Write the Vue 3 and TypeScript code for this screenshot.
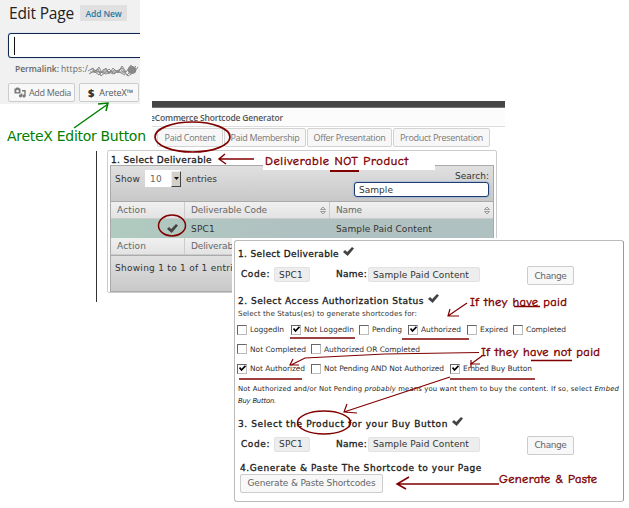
<script setup lang="ts">
import type { Directive } from 'vue'

interface Status { label: string; on: boolean; width: number }

// Tracks a label out (or in) so that it fills the given width in pixels.
const vFit: Directive<HTMLElement, number> = {
  mounted(el, { value }) {
    const natural = el.getBoundingClientRect().width
    const count = (el.textContent ?? '').length
    el.style.letterSpacing = `${(value - natural) / count}px`
  },
}

const tabs = [
  { label: 'Paid Content', width: 51 },
  { label: 'Paid Membership', width: 69 },
  { label: 'Offer Presentation', width: 72 },
  { label: 'Product Presentation', width: 83 },
]

const statusRows: Status[][] = [
  [
    { label: 'LoggedIn', on: false, width: 34 },
    { label: 'Not LoggedIn', on: true, width: 50 },
    { label: 'Pending', on: false, width: 30 },
    { label: 'Authorized', on: true, width: 40 },
    { label: 'Expired', on: false, width: 28 },
    { label: 'Completed', on: false, width: 40 },
  ],
  [
    { label: 'Not Completed', on: false, width: 56 },
    { label: 'Authorized OR Completed', on: false, width: 96 },
  ],
  [
    { label: 'Not Authorized', on: true, width: 55 },
    { label: 'Not Pending AND Not Authorized', on: false, width: 120 },
    { label: 'Embed Buy Button', on: true, width: 69 },
  ],
]
</script>

<template>
  <main class="canvas">
    <section class="editor">
      <div class="title-row">
        <h1 v-fit="65">Edit Page</h1>
        <span class="add-new"><span v-fit="36">Add New</span></span>
      </div>
      <div class="title-input"><i class="caret"></i></div>
      <div class="permalink"><b v-fit="44">Permalink:</b><span v-fit="27">https:/</span></div>
      <div class="media-row">
        <span class="wp-button media">
          <svg width="12" height="11" viewBox="0 0 12 11">
            <path fill-rule="evenodd" d="M.5 1.500h1.300L2.500.5h2l.7 1h1.300v5h-6zM3.500 2.700a1.300 1.300 0 1 0 .01 0z" fill="#777" />
            <path d="M8 3.800h3v5M7.700 9V6.500" fill="none" stroke="#777" stroke-width="1.400" />
            <circle cx="10" cy="9" r="1.600" fill="#777" /><circle cx="6.500" cy="8.800" r="1.600" fill="#777" />
          </svg>
          <span v-fit="42">Add Media</span>
        </span>
        <span class="wp-button aretex"><b>$</b><span v-fit="34">AreteX™</span></span>
      </div>
    </section>

    <section class="generator">
      <div class="top-bar"></div>
      <header><span v-fit="133">eCommerce Shortcode Generator</span></header>
      <nav>
        <span v-for="tab in tabs" :key="tab.label" class="tab"><span v-fit="tab.width">{{ tab.label }}</span></span>
      </nav>
    </section>

    <section class="deliverables">
      <div class="card">
        <h2><span v-fit="101">1. Select Deliverable</span></h2>
        <div class="table">
          <div class="toolbar">
            <div class="length">
              <span v-fit="25">Show</span>
              <span class="select"><span v-fit="12">10</span><i><svg width="5" height="3"><path d="M0 0h5L2.500 3z" fill="#111" /></svg></i></span>
              <span v-fit="31">entries</span>
            </div>
            <div class="search">
              <label v-fit="34">Search:</label>
              <div class="search-box"><span v-fit="34">Sample</span></div>
            </div>
          </div>
          <div class="row head">
            <span class="cell"><span v-fit="29">Action</span></span>
            <span class="cell"><span v-fit="76">Deliverable Code</span><svg class="sort" width="6" height="9"><path d="M.5 3.500 3 1l2.500 2.500zM.5 5.500 3 8l2.500-2.500z" fill="none" stroke="#888" stroke-width=".8" /></svg></span>
            <span class="cell"><span v-fit="26">Name</span><svg class="sort" width="6" height="9"><path d="M.5 3.500 3 1l2.500 2.500zM.5 5.500 3 8l2.500-2.500z" fill="none" stroke="#888" stroke-width=".8" /></svg></span>
          </div>
          <div class="row record">
            <span class="cell pick"><svg width="11" height="9" viewBox="0 0 11 9"><path d="M0 5 2 3l2.200 2L9 0l2 1.500L4.700 9z" fill="#444" /></svg></span>
            <span class="cell"><span v-fit="24">SPC1</span></span>
            <span class="cell"><span v-fit="96">Sample Paid Content</span></span>
          </div>
          <div class="row head">
            <span class="cell"><span v-fit="29">Action</span></span>
            <span class="cell"><span v-fit="42">Deliverab</span></span>
            <span class="cell"></span>
          </div>
          <div class="summary"><span v-fit="118">Showing 1 to 1 of 1 entri</span></div>
        </div>
      </div>
    </section>

    <section class="steps-wrap">
      <div class="steps">
        <h2 class="step-one"><span v-fit="101">1. Select Deliverable</span><svg class="tick" width="11" height="9" viewBox="0 0 11 9"><path d="M0 5 2 3l2.200 2L9 0l2 1.500L4.700 9z" fill="#444" /></svg></h2>
        <div class="fields">
          <b><span v-fit="29">Code:</span></b><span class="chip"><span v-fit="24">SPC1</span></span>
          <b class="name"><span v-fit="31">Name:</span></b><span class="chip wide"><span v-fit="96">Sample Paid Content</span></span>
          <button type="button"><span v-fit="32">Change</span></button>
        </div>
        <h2 class="step-two"><span v-fit="186">2. Select Access Authorization Status</span><svg class="tick" width="11" height="9" viewBox="0 0 11 9"><path d="M0 5 2 3l2.200 2L9 0l2 1.500L4.700 9z" fill="#444" /></svg></h2>
        <p class="hint"><span v-fit="179">Select the Status(es) to generate shortcodes for:</span></p>
        <div v-for="(row, index) in statusRows" :key="index" class="statuses" :class="'statuses-' + index">
          <label v-for="status in row" :key="status.label">
            <i class="box"><svg v-if="status.on" width="7" height="7" viewBox="0 0 7 7"><path d="M.5 2.500 2.500 5 6.500.8" fill="none" stroke="#000" stroke-width="1.800" /></svg></i>
            <span v-fit="status.width">{{ status.label }}</span>
          </label>
        </div>
        <p class="note">
          <span v-fit="381">Not Authorized and/or Not Pending <em>probably</em> means you want them to buy the content. If so, select <em>Embed</em></span>
          <em v-fit="38">Buy Button.</em>
        </p>
        <h2 class="step-three"><span v-fit="210">3. Select the Product for your Buy Button</span><svg class="tick" width="11" height="9" viewBox="0 0 11 9"><path d="M0 5 2 3l2.200 2L9 0l2 1.500L4.700 9z" fill="#444" /></svg></h2>
        <div class="fields">
          <b><span v-fit="29">Code:</span></b><span class="chip"><span v-fit="24">SPC1</span></span>
          <b class="name"><span v-fit="31">Name:</span></b><span class="chip wide"><span v-fit="96">Sample Paid Content</span></span>
          <button type="button"><span v-fit="32">Change</span></button>
        </div>
        <h2 class="step-four"><span v-fit="242">4.Generate &amp; Paste The Shortcode to your Page</span></h2>
        <button type="button" class="generate"><span v-fit="128">Generate &amp; Paste Shortcodes</span></button>
      </div>
    </section>

    <svg class="markup" width="629" height="508" viewBox="0 0 629 508">
      <path d="M263 151h172v19H263z" fill="#fff" />
      <g fill="none" stroke="#888" stroke-width="1">
        <path d="m88 71 5-3 2 5 4-6 3 6 4-5 3 6 4-6 5 5 4-7 4 6 5-7 3 7 4-5M89 74l9-5 3 7 8-7 5 5 8-6 5 7 9-9M91 69l8 6 5-6 9 5 7-5 8 7 8-5M90 72h36M94 70l12 4 9-4 10 5" />
        <ellipse cx="132" cy="70" rx="4" ry="3.500" fill="#888" />
      </g>
      <g fill="none" stroke="#008000" stroke-width="1.500">
        <path d="M74 128 108 104M98 104l10-1-2 8" />
      </g>
      <text class="green" x="7" y="141" textLength="139">AreteX Editor Button</text>
      <g fill="none" stroke="#800000" stroke-width="1.500">
        <ellipse cx="192.500" cy="137" rx="37.500" ry="15" stroke-width="1.700" />
        <ellipse cx="172" cy="225.500" rx="13.500" ry="10.500" />
        <ellipse cx="324" cy="422.500" rx="26.500" ry="11.500" />
        <path d="M219 159h35M225 154l-6 5 7 5" />
        <path d="M330 171h29" stroke-width="2" />
        <path d="M467 303 448 316M450 309l-2 7h11" stroke-width="1.200" />
        <path d="M514 306.500h26M531 360.500h41" />
        <path d="M290 338h65M402 339h67M239 379h63M450 379h85" stroke-width="1.700" />
        <path d="M479 352.500 385 354 305 358 291 365M293 359l-3 6h9" stroke-width="1.200" />
        <path d="M482 356 471 364M471 360v7M470 364h10" stroke-width="1.200" />
        <path d="M450 377 344 412M347 404l-3 8 13 1" stroke-width="1.200" />
        <path d="M499 484H397M409 477l-12 7 9 5" />
      </g>
      <g class="red">
        <text x="265" y="165" textLength="143">Deliverable NOT Product</text>
        <text x="470" y="306" textLength="97">If they have paid</text>
        <text x="481" y="356" textLength="119">If they have not paid</text>
        <text x="499" y="483" textLength="98">Generate &amp; Paste</text>
      </g>
    </svg>
  </main>
</template>

<style>
body { background: #fff; }
</style>

<style scoped>
* { box-sizing: border-box; }
.canvas { position: relative; width: 629px; height: 508px; overflow: hidden; font-family: "DejaVu Sans", sans-serif; font-size: 9px; color: #333; white-space: nowrap; }
h1, h2, p { margin: 0; font-weight: 400; }
i { font-style: normal; }
span, b { flex: none; }

.editor { position: absolute; left: 0; top: 0; width: 140px; height: 104px; overflow: hidden; background: #f1f1f1; font-family: "Open Sans", sans-serif; }
.title-row { display: flex; align-items: center; height: 26px; padding-left: 9px; }
h1 { font-size: 15.500px; line-height: 24px; color: #222; }
.add-new { display: flex; align-items: center; justify-content: center; width: 47px; height: 16px; margin-left: 6px; background: #e0e0e0; border-radius: 1px; color: #2379a4; font-size: 8.500px; font-weight: 600; }
.title-input { width: 145px; height: 25px; margin: 7px 0 0 8px; padding: 3px 5px; background: #fff; border: 1px solid #10284e; border-radius: 3px; box-shadow: 0 0 1px #5b9dd9; }
.caret { display: block; width: 1px; height: 18px; background: #111; }
.permalink { display: flex; gap: 2px; height: 22px; padding: 0 0 0 15px; line-height: 22px; font-size: 8.500px; color: #666; }
.permalink b { font-weight: 600; }
.media-row { display: flex; gap: 4px; margin: 3px 0 0 8px; }
.wp-button { display: flex; align-items: center; height: 19px; border: 1px solid #ccc; border-radius: 2px; background: #f8f8f8; color: #666; font-size: 9px; }
.media { width: 67px; gap: 3px; padding-left: 5px; }
.aretex { width: 60px; gap: 5px; padding-left: 8px; color: #555; }
.aretex b { font-size: 11px; font-weight: 800; color: #333; }

.generator { position: absolute; left: 152px; top: 101px; width: 353px; height: 50px; overflow: hidden; font-family: "Open Sans", sans-serif; font-size: 9px; }
.top-bar { height: 7px; background: #464646; border-bottom: 1px solid #777; }
.generator header { height: 19px; margin-left: -2px; line-height: 20px; background: #fcfcfc; border-bottom: 1px solid #ddd; font-size: 8.500px; font-weight: 600; color: #555; }
nav { display: grid; grid-template-columns: 66px 82px 85px 97px; gap: 1px; height: 19px; margin: 1px 0 0 5px; }
.tab { display: flex; align-items: center; justify-content: center; border: 1px solid #d3d3d3; border-radius: 2px; background: #f7f7f7; color: #777; }

.deliverables { position: absolute; left: 96px; top: 151px; width: 401px; height: 151px; padding-left: 10px; border-left: 1px solid #333; }
.card { width: 390px; height: 143px; margin-top: -1px; padding: 0 2px; border: 1px solid #ccc; border-radius: 2px; }
h2 { display: flex; align-items: center; font-size: 9px; color: #111; -webkit-text-stroke: .3px #222; }
.card h2 { height: 14px; padding: 4px 0 0 1px; }
.table { width: 384px; border: 1px solid #aaa; }
.toolbar { display: flex; justify-content: space-between; height: 36px; padding: 0 4px; background: linear-gradient(#e0e0e0, #c8c8c8); border-bottom: 1px solid #aaa; }
.length { display: flex; align-items: center; gap: 5px; height: 25px; }
.select { display: flex; align-items: center; justify-content: space-between; width: 36px; height: 17px; padding-left: 5px; background: #fff; color: #666; }
.select i { display: flex; align-items: center; justify-content: center; width: 10px; height: 16px; background: #d4d0c8; border: 1px solid; border-color: #eee #444 #444 #eee; }
.search { display: flex; flex-direction: column; align-items: flex-end; }
.search label { height: 16px; line-height: 20px; }
.search-box { width: 135px; height: 15px; padding-left: 4px; background: #fff; border: 1px solid #1e3a72; border-radius: 3px; box-shadow: 0 0 2px #5b9dd9; line-height: 14px; }
.row { display: grid; grid-template-columns: 73px 145px 1fr; }
.cell { display: flex; align-items: center; justify-content: space-between; padding: 0 3px 0 6px; }
.head { height: 17px; background: linear-gradient(#f0f0f0, #e3e3e3); color: #666; border-bottom: 1px solid #ccc; }
.head .cell + .cell { border-left: 1px solid #ccc; }
.record { height: 19px; background: linear-gradient(90deg, #b0cbbf 0%, #b0c1c1 45%); }
.record .cell { padding-left: 7px; }
.pick { justify-content: flex-end; padding-right: 6px; }
.summary { height: 36px; padding: 6px 4px; line-height: 12px; background: linear-gradient(#e0e0e0, #c8c8c8); border-top: 1px solid #aaa; }

.steps-wrap { position: absolute; left: 232px; top: 238px; width: 397px; height: 270px; padding: 2px; background: #fff; }
.steps { width: 390px; height: 262px; padding: 5px 3px 0; border: 1px solid #bbb; border-right-color: #999; border-radius: 3px; }
.steps h2 { height: 16px; }
.tick { flex: none; margin: -5px 0 0 4px; }
.fields { display: flex; height: 19px; margin: 4px 0 0 3px; }
.fields b { width: 33px; font-weight: 400; line-height: 17px; color: #222; -webkit-text-stroke: .3px #222; }
.fields .name { width: 32px; margin-left: 26px; }
.chip { display: flex; align-items: center; width: 36px; height: 15px; margin-top: 1px; padding-left: 4px; background: #ededed; border: 1px solid #e2e2e2; border-radius: 2px; }
.chip.wide { width: 112px; }
button { display: flex; align-items: center; justify-content: center; width: 47px; height: 19px; margin: 0; padding: 0; background: #f8f8f8; border: 1px solid #ccc; border-radius: 2px; font: inherit; color: #666; }
.fields button { margin-left: 47px; }
.steps .step-two { margin-top: 8px; }
.hint { height: 11px; line-height: 10px; font-size: 7.200px; }
.statuses { display: grid; height: 19.500px; font-size: 7.500px; }
.statuses-0 { grid-template-columns: 54px 68px 49px 59px 46px 60px; }
.statuses-1 { grid-template-columns: 74px 120px; }
.statuses-2 { grid-template-columns: 74px 139px 100px; }
.statuses label { display: flex; align-items: center; gap: 3px; margin-left: -1px; }
.box { display: flex; align-items: center; justify-content: center; flex: none; width: 10px; height: 10px; background: #fff; border: 1px solid; border-color: #666 #bbb #bbb #666; }
.note { display: flex; flex-direction: column; align-items: flex-start; margin-top: 4px; font-size: 6.800px; line-height: 12.500px; color: #222; }
.steps .step-three { margin-top: 8px; }
.steps .step-four { height: 13px; margin: 7px 0 0 2px; }
.generate { width: 143px; height: 19px; margin: -1px 0 0 2px; }

.markup { position: absolute; left: 0; top: 0; }
.green { font: 14px "DejaVu Sans", sans-serif; fill: #008000; }
.red text { font: 500 12.500px "Comic Sans MS", "Comic Neue", "Noto Sans", sans-serif; fill: #800000; stroke: #800000; stroke-width: .4px; }
</style>
